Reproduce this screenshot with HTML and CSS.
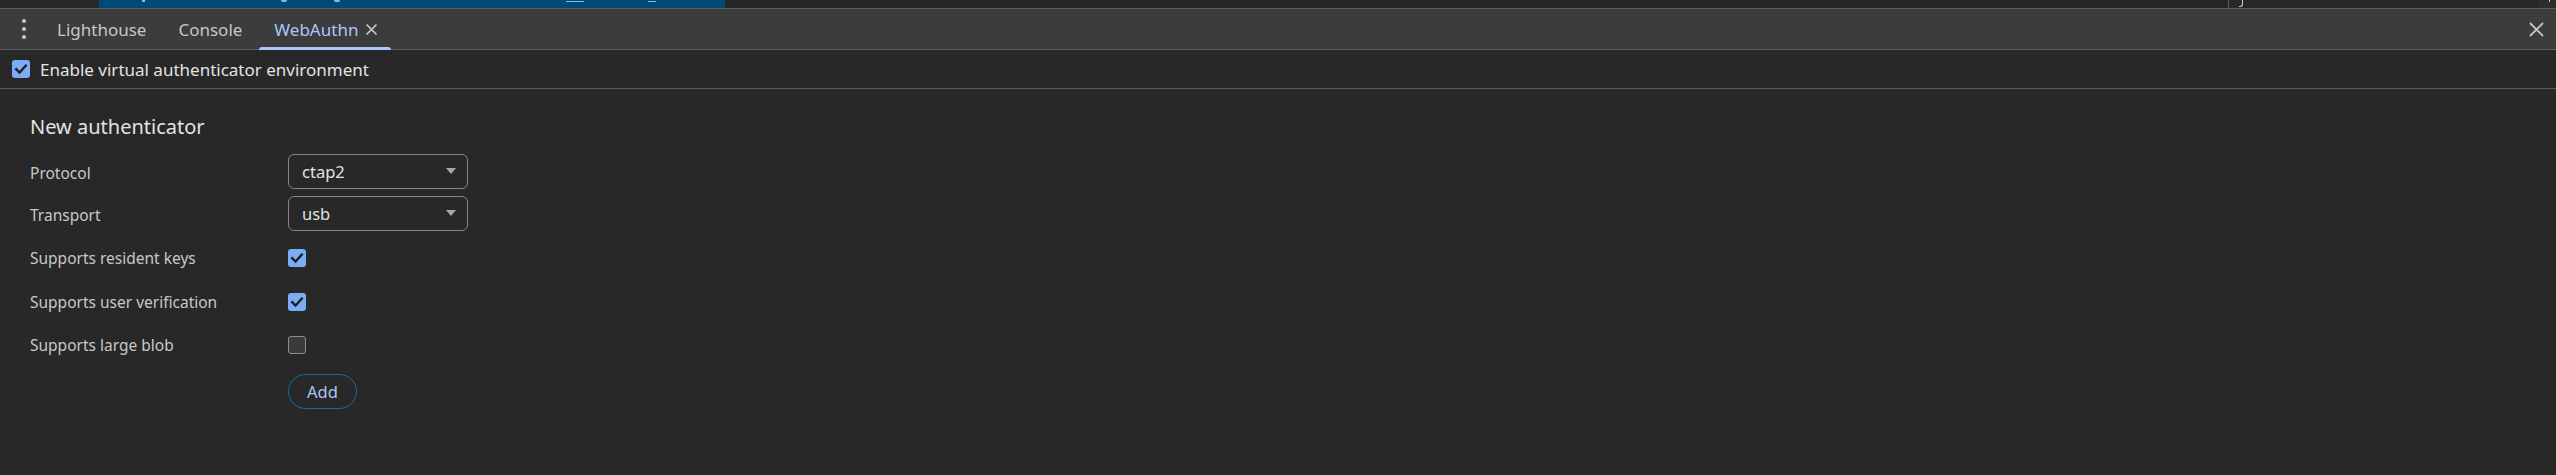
FILE: index.html
```html
<!DOCTYPE html>
<html lang="en">
<head>
<meta charset="utf-8">
<title>WebAuthn</title>
<link rel="stylesheet" href="styles.css">
</head>
<body>
<div class="top-strip">
  <div class="strip-left"></div>
  <div class="strip-sel">
    <span class="frag f1"></span>
    <span class="frag f2"></span>
    <span class="frag f3"></span>
    <span class="frag f4"></span>
    <span class="frag f5"></span>
  </div>
  <div class="strip-fill"></div>
  <div class="strip-pane">
    <span class="brace-frag"></span>
    <span class="pane-scroll"><span class="scroll-dot"></span></span>
  </div>
</div>

<div class="toolbar">
  <div class="kebab" aria-label="More tabs">
    <span class="dot"></span><span class="dot"></span><span class="dot"></span>
  </div>
  <div class="tabs">
    <div class="tab">Lighthouse</div>
    <div class="tab">Console</div>
    <div class="tab tab-active">WebAuthn
      <svg class="tab-close" viewBox="0 0 13 13" width="13" height="13"><path d="M1.5 1.5 L11.5 11.5 M11.5 1.5 L1.5 11.5" stroke="#c7c7c7" stroke-width="1.7" fill="none"/></svg>
    </div>
  </div>
  <svg class="panel-close" viewBox="0 0 15 15" width="15" height="15"><path d="M1 1 L14 14 M14 1 L1 14" stroke="#c7c7c7" stroke-width="1.8" fill="none"/></svg>
</div>

<div class="env-row">
  <span class="cb cb-on"><svg viewBox="0 0 18 18" width="18" height="18"><path d="M4.2 9.2 L7.6 12.6 L13.8 5.6" stroke="#1f1f1f" stroke-width="2.4" fill="none" stroke-linecap="square"/></svg></span>
  <span class="env-label">Enable virtual authenticator environment</span>
</div>

<div class="form">
  <div class="form-title">New authenticator</div>
  <div class="form-grid">
    <div class="cell label label-select">Protocol</div>
    <div class="cell"><div class="select"><span>ctap2</span><span class="arrow"></span></div></div>

    <div class="cell label label-select">Transport</div>
    <div class="cell"><div class="select"><span>usb</span><span class="arrow"></span></div></div>

    <div class="cell label">Supports resident keys</div>
    <div class="cell"><span class="cb cb-on"><svg viewBox="0 0 18 18" width="18" height="18"><path d="M4.2 9.2 L7.6 12.6 L13.8 5.6" stroke="#1f1f1f" stroke-width="2.4" fill="none" stroke-linecap="square"/></svg></span></div>

    <div class="cell label">Supports user verification</div>
    <div class="cell"><span class="cb cb-on"><svg viewBox="0 0 18 18" width="18" height="18"><path d="M4.2 9.2 L7.6 12.6 L13.8 5.6" stroke="#1f1f1f" stroke-width="2.4" fill="none" stroke-linecap="square"/></svg></span></div>

    <div class="cell label">Supports large blob</div>
    <div class="cell"><span class="cb cb-off"></span></div>

    <div class="cell label"></div>
    <div class="cell"><span class="add-btn">Add</span></div>
  </div>
</div>
</body>
</html>
```

FILE: styles.css
```css
html, body {
  margin: 0;
  padding: 0;
  background: #282828;
  font-family: "Noto Sans", "Liberation Sans", sans-serif;
  color: #c7c7c7;
}

/* top strip (clipped content above the drawer) */
.top-strip {
  display: flex;
  height: 8px;
  border-bottom: 1px solid #5c5c5c;
  background: #282828;
  overflow: hidden;
}
.strip-left { width: 99px; flex: none; }
.strip-sel {
  width: 626px;
  flex: none;
  background: #004a77;
  display: flex;
  align-items: flex-start;
}
.frag { display: block; background: #8fb8e8; height: 2px; }
.f1 { margin-left: 43px; width: 3px; height: 2px; }
.f2 { margin-left: 136px; width: 6px; height: 2px; border-radius: 0 0 3px 3px; }
.f3 { margin-left: 47px; width: 6px; height: 2px; border-radius: 0 0 3px 3px; }
.f4 { margin-left: 226px; width: 18px; height: 1px; margin-top: 1px; }
.f5 { margin-left: 64px; width: 8px; height: 1px; margin-top: 1px; }
.strip-fill { flex: 1; background: #262626; }
.strip-pane {
  width: 327px;
  flex: none;
  border-left: 1px solid #5c5c5c;
  display: flex;
  background: #282828;
}
.brace-frag {
  display: block;
  width: 3px;
  height: 6px;
  margin-left: 10px;
  border-right: 1px solid #cfcfcf;
  border-bottom: 1px solid #cfcfcf;
  border-radius: 0 0 3px 0;
}
.pane-scroll {
  margin-left: auto;
  width: 18px;
  background: #2d2d2d;
  display: flex;
  justify-content: center;
}
.scroll-dot { display: block; width: 1px; height: 2px; background: #bdbdbd; margin-left: 4px; }

/* drawer toolbar */
.toolbar {
  display: flex;
  align-items: center;
  height: 40px;
  background: #3c3c3c;
  border-bottom: 1px solid #5c5c5c;
  font-size: 17px;
}
.kebab {
  display: flex;
  flex-direction: column;
  align-items: center;
  gap: 4px;
  width: 4px;
  padding-left: 22px;
  padding-right: 16px;
}
.kebab .dot {
  display: block;
  width: 4px;
  height: 4px;
  border-radius: 50%;
  background: #c7c7c7;
}
.tabs { display: flex; height: 100%; gap: 2px; }
.tab {
  position: relative;
  display: flex;
  align-items: center;
  padding: 0 15px;
  color: #c7c7c7;
  white-space: nowrap;
}
.tab-active { color: #a8c7fa; padding-right: 13px; }
.tab-active::after {
  content: "";
  position: absolute;
  left: 0;
  right: 0;
  bottom: -1px;
  height: 3px;
  border-radius: 3px 3px 0 0;
  background: #a8c7fa;
}
.tab-close { margin-left: 7px; }
.panel-close { margin-left: auto; margin-right: 12px; }

/* environment checkbox row */
.env-row {
  display: flex;
  align-items: center;
  gap: 10px;
  height: 38px;
  padding-left: 12px;
  border-bottom: 1px solid #5c5c5c;
  font-size: 17px;
  color: #e3e3e3;
}

.cb {
  display: inline-flex;
  width: 18px;
  height: 18px;
  box-sizing: border-box;
  border-radius: 3px;
  vertical-align: middle;
}
.cb-on { background: #7cacf8; }
.cb-off { background: #3a3a3a; border: 1.5px solid #8e8e8e; }

/* form */
.form { padding: 26px 30px 0 30px; }
.form-title {
  font-size: 20px;
  line-height: 24px;
  color: #e3e3e3;
  margin-bottom: 14px;
}
.form-grid {
  display: grid;
  grid-template-columns: 258px auto;
  grid-template-rows: 42px 45px 44px 43px 46px 36px;
  align-items: start;
}
.cell {
  height: 36px;
  display: flex;
  align-items: center;
}
.label {
  font-size: 15.5px;
  color: #c7c7c7;
}
.label-select { padding-top: 4px; box-sizing: border-box; }
.select {
  display: flex;
  align-items: center;
  box-sizing: border-box;
  width: 180px;
  height: 35px;
  border: 1px solid #858585;
  border-radius: 6px;
  padding: 0 11px 0 13px;
  font-size: 16.5px;
  color: #e3e3e3;
}
.arrow {
  margin-left: auto;
  width: 0;
  height: 0;
  border-left: 5px solid transparent;
  border-right: 5px solid transparent;
  border-top: 6px solid #a8a8a8;
}
.add-btn {
  display: flex;
  align-items: center;
  justify-content: center;
  box-sizing: border-box;
  width: 69px;
  height: 35px;
  border: 1px solid #0c6fa8;
  border-radius: 18px;
  font-size: 16.5px;
  color: #a8c7fa;
}
```
